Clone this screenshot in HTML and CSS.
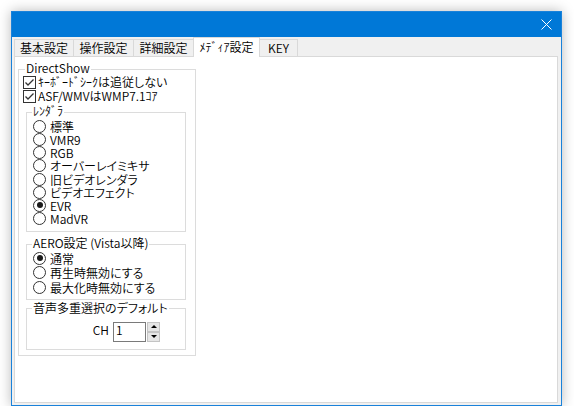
FILE: index.html
```html
<!DOCTYPE html>
<html lang="ja">
<head>
<meta charset="utf-8">
<title>ﾒﾃﾞｨｱ設定</title>
<link rel="stylesheet" href="styles.css">
</head>
<body>
<div class="window">
  <div class="titlebar">
    <svg class="close" width="11" height="11" viewBox="0 0 11 11"><path d="M0.5 0.5L10.5 10.5M10.5 0.5L0.5 10.5" stroke="#fff" stroke-width="1" fill="none"/></svg>
  </div>
  <div class="client">
    <div class="tabs">
      <div class="tab t1">基本設定</div>
      <div class="tab t2">操作設定</div>
      <div class="tab t3">詳細設定</div>
      <div class="tab t4 active"><span class="hw">ﾒﾃﾞｨｱ</span>設定</div>
      <div class="tab t5">KEY</div>
    </div>
    <div class="panel">
      <fieldset class="group outer">
        <legend>DirectShow</legend>
        <div class="checks">
          <div class="check"><span class="box"><svg width="11" height="11" viewBox="0 0 11 11"><path d="M1.5 5.5L4 8L9.5 2.5" stroke="#333" stroke-width="1.3" fill="none"/></svg></span><span><span class="hw">ｷｰﾎﾞｰﾄﾞｼｰｸ</span>は追従しない</span></div>
          <div class="check"><span class="box"><svg width="11" height="11" viewBox="0 0 11 11"><path d="M1.5 5.5L4 8L9.5 2.5" stroke="#333" stroke-width="1.3" fill="none"/></svg></span><span>ASF/WMVはWMP7.1<span class="hw">ｺｱ</span></span></div>
        </div>
        <fieldset class="group inner renderer">
          <legend><span class="hw">ﾚﾝﾀﾞﾗ</span></legend>
          <div class="radio"><span class="circle"></span>標準</div>
          <div class="radio"><span class="circle"></span>VMR9</div>
          <div class="radio"><span class="circle"></span>RGB</div>
          <div class="radio"><span class="circle"></span>オーバーレイミキサ</div>
          <div class="radio"><span class="circle"></span>旧ビデオレンダラ</div>
          <div class="radio"><span class="circle"></span>ビデオエフェクト</div>
          <div class="radio on"><span class="circle"></span>EVR</div>
          <div class="radio"><span class="circle"></span>MadVR</div>
        </fieldset>
        <fieldset class="group inner aero">
          <legend>AERO設定 (Vista以降)</legend>
          <div class="radio r2 on"><span class="circle"></span>通常</div>
          <div class="radio r2"><span class="circle"></span>再生時無効にする</div>
          <div class="radio r2"><span class="circle"></span>最大化時無効にする</div>
        </fieldset>
        <fieldset class="group inner audio">
          <legend>音声多重選択のデフォルト</legend>
          <div class="ch-row">
            <span class="ch-label">CH</span>
            <div class="num">1</div>
            <div class="spin">
              <span class="spin-btn"><span class="tri up"></span></span>
              <span class="spin-btn"><span class="tri down"></span></span>
            </div>
          </div>
        </fieldset>
      </fieldset>
    </div>
  </div>
</div>
</body>
</html>
```
FILE: styles.css
```css
html, body {
  margin: 0;
  padding: 0;
}
body {
  background: #ffffff;
  font-family: "Noto Sans CJK JP", "Noto Sans", sans-serif;
  font-size: 12px;
  font-weight: 350;
  color: #000;
  font-feature-settings: "palt";
}
.hw {
  font-feature-settings: normal;
}
.window {
  margin: 11px 0 0 11px;
  width: 551px;
  height: 395px;
  box-sizing: border-box;
  border: 1px solid #1a82da;
  display: flex;
  flex-direction: column;
  box-shadow: 0 0 12px rgba(0, 0, 0, 0.28);
}
.titlebar {
  height: 25px;
  flex: none;
  background: #0078d7;
  display: flex;
  justify-content: flex-end;
  align-items: center;
  padding-right: 9px;
}
.close {
  display: block;
}
.client {
  flex: 1;
  background: #f0f0f0;
  display: flex;
  flex-direction: column;
  padding: 0 3px 2px 2px;
  min-height: 0;
}
.tabs {
  height: 19px;
  flex: none;
  display: flex;
  align-items: flex-end;
}
.tab {
  height: 17px;
  box-sizing: border-box;
  border: 1px solid #d9d9d9;
  border-bottom: 0;
  margin-right: -1px;
  text-align: center;
  line-height: 16px;
  background: #f0f0f0;
  white-space: nowrap;
}
.tab.active {
  height: 20px;
  margin-bottom: -1px;
  background: #fff;
  position: relative;
  z-index: 1;
  padding-top: 1px;
}
.t1 { width: 60px; }
.t2 { width: 61px; }
.t3 { width: 61px; }
.t4 { width: 67px; }
.t5 { width: 39px; }
.panel {
  flex: 1;
  border: 1px solid #d9d9d9;
  background: #fff;
  padding: 0 0 0 3px;
}
fieldset.group {
  margin: 0;
  border: 1px solid #dcdcdc;
  padding: 0 0 0 6px;
  min-width: 0;
  box-sizing: border-box;
}
fieldset.group > legend {
  padding: 0 1px 2px;
  line-height: 12px;
  margin-left: -1px;
  white-space: nowrap;
}
.outer {
  width: 178px;
  margin-top: 5px !important;
  padding: 0 0 5px 4px !important;
}
.outer > legend {
  margin-left: 2px !important;
}
.checks {
  margin-top: -1px;
}
.check {
  display: flex;
  align-items: center;
  height: 14px;
  line-height: 14px;
  white-space: nowrap;
}
.box {
  width: 13px;
  height: 13px;
  box-sizing: border-box;
  border: 1px solid #333;
  background: #fff;
  margin-right: 2px;
  flex: none;
}
.box svg {
  display: block;
}
.inner {
  width: 160px;
  margin-left: 3px !important;
}
.renderer {
  margin-top: 2px !important;
  padding: 1px 0 6px 6px !important;
}
.aero {
  margin-top: 5px !important;
  padding: 0 0 4px 6px !important;
}
.audio {
  margin-top: 2px !important;
  padding: 6px 0 7px 6px !important;
}
.radio {
  display: flex;
  align-items: center;
  height: 13.15px;
  line-height: 13px;
  white-space: nowrap;
}
.radio.r2 {
  height: 14.5px;
}
.circle {
  width: 13px;
  height: 13px;
  box-sizing: border-box;
  border: 1px solid #333;
  border-radius: 50%;
  background: #fff;
  margin-right: 4px;
  flex: none;
  display: flex;
  align-items: center;
  justify-content: center;
}
.radio.on .circle::after {
  content: "";
  width: 6px;
  height: 6px;
  border-radius: 50%;
  background: #1a1a1a;
}
.ch-row {
  display: flex;
  align-items: flex-start;
  height: 20px;
}
.ch-label {
  width: 76px;
  text-align: right;
  line-height: 14px;
  margin-top: 1px;
  margin-right: 4px;
}
.num {
  width: 33px;
  height: 20px;
  box-sizing: border-box;
  border: 1px solid #7a7a7a;
  padding-left: 2px;
  line-height: 14px;
}
.spin {
  width: 13px;
  height: 20px;
  margin-left: 1px;
  display: flex;
  flex-direction: column;
}
.spin-btn {
  height: 10px;
  box-sizing: border-box;
  border: 1px solid #c4c4c4;
  background: #e6e6e6;
  display: flex;
  align-items: center;
  justify-content: center;
}
.tri {
  width: 0;
  height: 0;
  border-left: 3px solid transparent;
  border-right: 3px solid transparent;
}
.tri.up {
  border-bottom: 3px solid #000;
}
.tri.down {
  border-top: 3px solid #000;
}
```
